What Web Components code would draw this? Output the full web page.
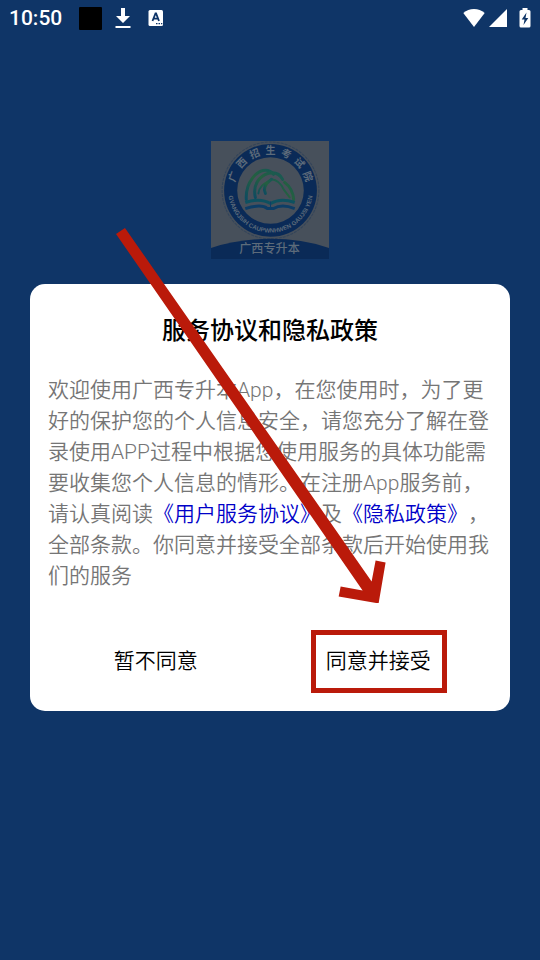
<!DOCTYPE html>
<html lang="zh-CN">
<head>
<meta charset="utf-8">
<meta name="viewport" content="width=device-width, initial-scale=1">
<title>服务协议和隐私政策</title>
<style>
    body {
        margin: 0;
        background-color: #0f3567;
        font-family: Roboto, "Noto Sans CJK SC", sans-serif;
    }
</style>
</head>
<body>
<app-screen>
    <status-bar slot="status" time="10:50"></status-bar>
    <app-logo slot="background"></app-logo>
    <privacy-dialog heading="服务协议和隐私政策">
        欢迎使用广西专升本App，在您使用时，为了更好的保护您的个人信息安全，请您充分了解在登录使用APP过程中根据您使用服务的具体功能需要收集您个人信息的情形。在注册App服务前，请认真阅读<agreement-link href="#service">《用户服务协议》</agreement-link>及<agreement-link href="#privacy">《隐私政策》</agreement-link>，全部条款。你同意并接受全部条款后开始使用我们的服务
        <dialog-button slot="actions">暂不同意</dialog-button>
        <dialog-button slot="actions" marked>同意并接受</dialog-button>
        <pointer-arrow slot="pointer"></pointer-arrow>
    </privacy-dialog>
</app-screen>

<script>
class AppScreen extends HTMLElement {

    constructor() {
        super();
        this.attachShadow({mode: "open"}).innerHTML = `
        <style>
        :host {
            display: flex;
            flex-direction: column;
            min-height: 100vh;
        }

        /* the dialog lies over the splash, both in the same cell */
        main {
            flex: 1;
            display: grid;
            align-items: center;
            padding: 0 30px 1px;
        }

        main > * {
            grid-area: 1 / 1;
        }

        .splash {
            align-self: start;
            display: flex;
            justify-content: center;
            padding-top: 105px;
        }
        </style>
        <slot name="status"></slot>
        <main>
            <div class="splash"><slot name="background"></slot></div>
            <div><slot></slot></div>
        </main>
        `;
    }
}

class StatusBar extends HTMLElement {

    constructor() {
        super();
        this.attachShadow({mode: "open"});
    }

    connectedCallback() {
        this.shadowRoot.innerHTML = `
        <style>
        :host {
            display: flex;
            align-items: center;
            justify-content: space-between;
            height: 36px;
            padding: 0 9px;
            color: #fff;
            font-size: 21px;
            font-weight: 500;
        }

        div {
            display: flex;
            align-items: center;
        }

        .block {
            width: 23px;
            height: 23px;
            margin: 0 13px 0 17px;
            border-radius: 1px;
            background-color: #000;
        }

        .download {
            margin-right: 17px;
        }

        .signals {
            gap: 4px;
        }

        .battery {
            margin-left: 8px;
        }

        svg {
            display: block;
        }
        </style>
        <div>
            <time>${this.getAttribute("time")}</time>
            <span class="block"></span>
            <svg class="download" width="16" height="22" viewBox="0 0 16 22" fill="#fff">
                <path d="M6 1h4v8h5l-7 7-7-7h5zM.5 19h15v2H.5z"/>
            </svg>
            <svg width="16" height="16" viewBox="0 0 16 16">
                <rect x="0.500" y="0" width="14.500" height="16" rx="1.500" fill="#fff"/>
                <path d="M4.500 11 7.500 3.500h.6L11 11M5.700 8.700h4.200" fill="none" stroke="#0f3567" stroke-width="1.800"/>
                <path d="M8 13h1.500v1.300H8zM10.500 13H12v1.300h-1.500zM13 13h1.300v1.300H13z" fill="#0f3567"/>
            </svg>
        </div>
        <div class="signals">
            <svg width="22" height="19" viewBox="0 0 22 19" fill="#fff">
                <path d="M11 18 .3 4Q5 0 11 0T21.700 4z"/>
            </svg>
            <svg width="18" height="19" viewBox="0 0 18 19" fill="#fff">
                <path d="M18 0v18H0z"/>
            </svg>
            <svg class="battery" width="12" height="21" viewBox="0 0 12 21">
                <path d="M3.500 0h5v2H10q1.500 0 1.500 1.500v14.500q0 1.500-1.500 1.500H2Q.5 19.500.5 18V3.500Q.5 2 2 2h1.500z" fill="#fff"/>
                <path d="M7.500 4.500 2.700 11.500h2.800L4.500 17l4.800-7H6.500z" fill="#0f3567"/>
            </svg>
        </div>
        `;
    }
}

class AppLogo extends HTMLElement {

    constructor() {
        super();
        this.attachShadow({mode: "open"}).innerHTML = `
        <style>
        :host {
            display: block;
            width: 118px;
        }

        svg {
            display: block;
            width: 100%;
        }

        text {
            fill: #5d6b7a;
            text-anchor: middle;
        }

        .upper {
            font: bold 10px "Noto Sans CJK SC", sans-serif;
        }

        .lower {
            font: bold 6px "Liberation Sans", sans-serif;
        }

        .name {
            font: 500 12px "Noto Sans CJK SC", sans-serif;
        }
        </style>
        <svg viewBox="0 0 117 117">
            <defs>
                <path id="top" d="M23 49a36 36 0 0 1 72 0"/>
                <path id="bottom" d="M17.600 41.700A42 42 0 1 0 100.400 41.700"/>
                <linearGradient id="hill" x1="0" y1="1" x2="1" y2="0">
                    <stop offset="0" stop-color="#0d4b61"/>
                    <stop offset="0.500" stop-color="#25603f"/>
                    <stop offset="1" stop-color="#175755"/>
                </linearGradient>
            </defs>
            <rect width="117" height="117" fill="#47505b"/>
            <circle cx="59" cy="49" r="48" fill="none" stroke="#33445a" stroke-width="1" stroke-dasharray="3 1"/>
            <circle cx="59" cy="49" r="46" fill="#0a2a57"/>
            <circle cx="59" cy="49" r="33" fill="#47505b"/>
            <g fill="none" stroke="url(#hill)" stroke-width="3" stroke-linecap="round">
                <path d="M35 58C34 40 46 29 54 29q5 0 8 4"/>
                <path d="M44 56c-3-13 4-21 13-24q10-2 14 6"/>
                <path d="M47 52c1-9 9-11 13-14q8 1 12 10l6 8" stroke-width="2"/>
                <path d="M60 38c-7 5-8 10-6 14"/>
                <path d="M73 41q8 6 9 17"/>
            </g>
            <g fill="none" stroke="#0d3d66" stroke-width="3">
                <path d="M34 61q15-5 25 1 10-6 24-1" stroke="#0e5160"/>
                <path d="M34 67q16-5 22 0h6q8-5 21 0"/>
                <path d="M59 60v7" stroke-width="1"/>
            </g>
            <text class="upper"><textPath href="#top" startOffset="50%">广&#160; 西&#160; 招&#160; 生&#160; 考&#160; 试&#160; 院</textPath></text>
            <text class="lower"><textPath href="#bottom" startOffset="50%">GVANGJSIH CAUPWNHWEN GAUJSI YEN</textPath></text>
            <path d="M0 106Q28 97 59 97t58 9v11H0z" fill="#0a2a57"/>
            <text class="name" x="58" y="111">广西专升本</text>
        </svg>
        `;
    }
}

class PrivacyDialog extends HTMLElement {

    constructor() {
        super();
        this.attachShadow({mode: "open"});
    }

    connectedCallback() {
        this.shadowRoot.innerHTML = `
        <style>
        :host {
            display: block;
            position: relative;
            border-radius: 15px;
            background-color: #fff;
        }

        h1 {
            margin: 0;
            padding: 29px 18px 26px;
            color: #000;
            font-size: 24px;
            font-weight: 500;
            line-height: 36px;
            text-align: center;
        }

        p {
            margin: 0;
            padding: 0 18px;
            color: #757575;
            font-size: 21px;
            font-weight: 350;
            line-height: 31px;
            text-spacing-trim: space-all;
        }

        .actions {
            display: flex;
            padding: 38px 20px 18px 15px;
        }
        </style>
        <section role="dialog" aria-labelledby="heading">
            <h1 id="heading">${this.getAttribute("heading")}</h1>
            <p><slot></slot></p>
            <div class="actions"><slot name="actions"></slot></div>
        </section>
        <slot name="pointer"></slot>
        `;
    }
}

class AgreementLink extends HTMLElement {

    constructor() {
        super();
        this.attachShadow({mode: "open"});
    }

    // no white space round the link, it would show between the characters
    connectedCallback() {
        this.shadowRoot.innerHTML = `<style>
        :host {
            display: inline;
        }

        a {
            color: #0000c8;
            text-decoration: none;
        }
        </style><a href="${this.getAttribute("href")}"><slot></slot></a>`;
    }
}

class DialogButton extends HTMLElement {

    constructor() {
        super();
        this.attachShadow({mode: "open"}).innerHTML = `
        <style>
        :host {
            flex: 1;
            display: flex;
            justify-content: center;
        }

        button {
            padding: 11px 11px 11px 10px;
            border: 5px solid transparent;
            background: none;
            color: #000;
            font: inherit;
            font-size: 21px;
            font-weight: 350;
            line-height: 31px;
            cursor: pointer;
        }

        :host([marked]) button {
            border-color: #ba1a0a;
        }
        </style>
        <button type="button"><slot></slot></button>
        `;
    }
}

class PointerArrow extends HTMLElement {

    constructor() {
        super();
        this.attachShadow({mode: "open"}).innerHTML = `
        <style>
        /* starts above the dialog and ends over the accept button */
        :host {
            position: absolute;
            top: -60px;
            left: 18%;
            width: 57%;
            pointer-events: none;
        }

        svg {
            display: block;
            width: 100%;
        }
        </style>
        <svg viewBox="0 0 274 380" fill="#ba1a0a" aria-hidden="true">
            <path d="M0 10 9 4 256 358 260 337 270 339 263 380 223 373 225 363 247 367z"/>
        </svg>
        `;
    }
}

customElements.define("app-screen", AppScreen);
customElements.define("status-bar", StatusBar);
customElements.define("app-logo", AppLogo);
customElements.define("privacy-dialog", PrivacyDialog);
customElements.define("agreement-link", AgreementLink);
customElements.define("dialog-button", DialogButton);
customElements.define("pointer-arrow", PointerArrow);
</script>
</body>
</html>
